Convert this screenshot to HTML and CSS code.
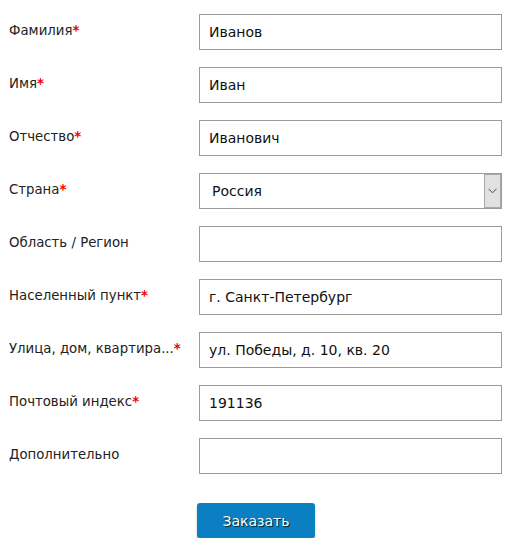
FILE: index.html
```html
<!DOCTYPE html>
<html lang="ru">
<head>
    <meta charset="UTF-8">
    <title>Оформление заказа</title>
    <link rel="stylesheet" href="styles.css">
</head>
<body>

<form class="order-form">
    <div class="form-row">
        <label for="last-name">Фамилия<span class="req">*</span></label>
        <input type="text" id="last-name" value="Иванов">
    </div>
    <div class="form-row">
        <label for="first-name">Имя<span class="req">*</span></label>
        <input type="text" id="first-name" value="Иван">
    </div>
    <div class="form-row">
        <label for="middle-name">Отчество<span class="req">*</span></label>
        <input type="text" id="middle-name" value="Иванович">
    </div>
    <div class="form-row">
        <label for="country">Страна<span class="req">*</span></label>
        <div class="select-wrap">
            <select id="country">
                <option>Россия</option>
                <option>Беларусь</option>
                <option>Казахстан</option>
            </select>
            <span class="select-arrow">
                <svg width="9" height="6" viewBox="0 0 9 6"><path d="M0.5 0.8 L4.5 4.8 L8.5 0.8" fill="none" stroke="#444" stroke-width="1"/></svg>
            </span>
        </div>
    </div>
    <div class="form-row">
        <label for="region">Область / Регион</label>
        <input type="text" id="region" value="">
    </div>
    <div class="form-row">
        <label for="city">Населенный пункт<span class="req">*</span></label>
        <input type="text" id="city" value="г. Санкт-Петербург">
    </div>
    <div class="form-row">
        <label for="street">Улица, дом, квартира...<span class="req">*</span></label>
        <input type="text" id="street" value="ул. Победы, д. 10, кв. 20">
    </div>
    <div class="form-row">
        <label for="zip">Почтовый индекс<span class="req">*</span></label>
        <input type="text" id="zip" value="191136">
    </div>
    <div class="form-row">
        <label for="extra">Дополнительно</label>
        <input type="text" id="extra" value="">
    </div>
    <div class="form-actions">
        <button type="submit">Заказать</button>
    </div>
</form>

</body>
</html>
```

FILE: styles.css
```css
body {
    margin: 0;
    background-color: #fff;
    font-family: "DejaVu Sans", Verdana, sans-serif;
    color: #222;
}
.order-form {
    padding: 14px 9px 0 9px;
}
.form-row {
    display: grid;
    grid-template-columns: 190px 303px;
    align-items: center;
    margin-bottom: 17px;
}
.form-row label {
    font-size: 13.3px;
    color: #222;
    padding-bottom: 3px;
}
.req {
    color: #e00;
    font-weight: bold;
}
.form-row input,
.form-row select {
    box-sizing: border-box;
    width: 303px;
    height: 36px;
    margin: 0;
    padding: 0 9px;
    border: 1px solid #9c9c9c;
    border-radius: 0;
    background: #fff;
    font-family: "DejaVu Sans", sans-serif;
    font-size: 14px;
    color: #111;
    outline: none;
}
.select-wrap {
    position: relative;
}
.form-row select {
    appearance: none;
    -webkit-appearance: none;
    padding-left: 12px;
}
.select-arrow {
    position: absolute;
    top: 1px;
    right: 1px;
    width: 15px;
    height: 32px;
    background-color: #e1e1e1;
    border: 1px solid #a8a8a8;
    display: flex;
    align-items: center;
    justify-content: center;
    pointer-events: none;
}
.form-actions {
    padding-left: 188px;
    padding-top: 12px;
}
.form-actions button {
    width: 118px;
    height: 35px;
    background-color: #0a80c2;
    color: #fff;
    border: none;
    border-radius: 3px;
    box-shadow: 0 2px 2px rgba(0, 0, 0, 0.3);
    font-family: "DejaVu Sans", Verdana, sans-serif;
    font-size: 14px;
    text-shadow: 1px 1px 1px #022;
    cursor: pointer;
}
.form-actions button:hover {
    background-color: #0873b0;
}
```
